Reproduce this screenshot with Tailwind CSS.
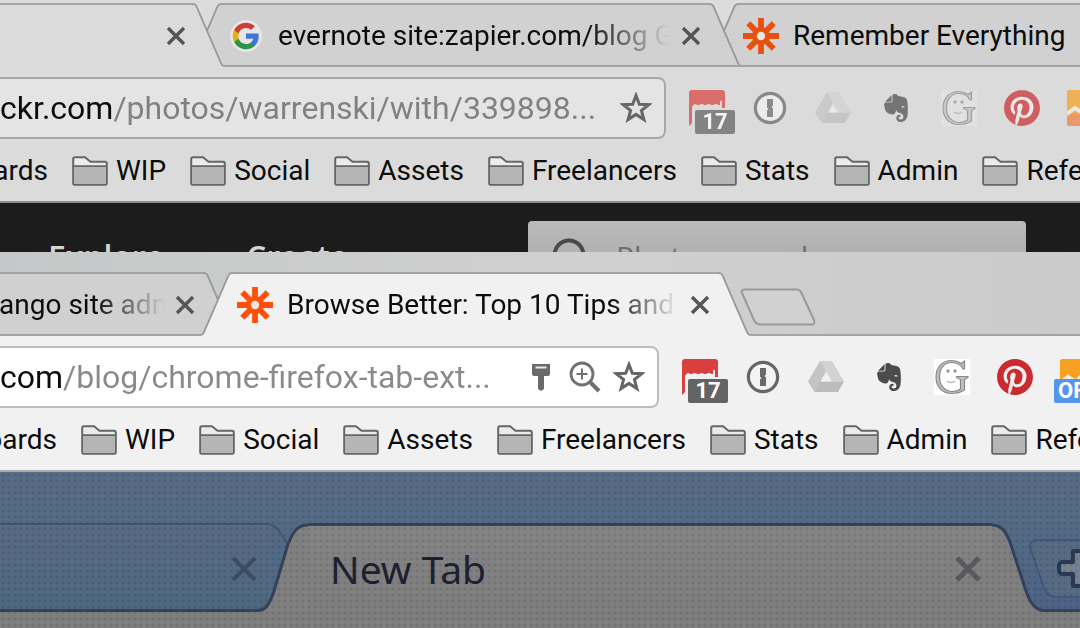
<!DOCTYPE html>
<html lang="en">
<head>
    <meta charset="UTF-8">
    <meta name="viewport" content="width=device-width, initial-scale=1.0">
    <title>Browser Tabs</title>
    <script src="https://cdn.jsdelivr.net/npm/@tailwindcss/browser@4"></script>
</head>
<body class="min-h-screen flex flex-col overflow-hidden bg-[#7f7f7f] font-['Roboto','Liberation_Sans',sans-serif] text-[#0c0c0c]">

    <!-- Shared icons -->
    <svg class="hidden">
        <symbol id="tab-left" viewBox="0 0 32 64">
            <path d="M32 1C29 1 28.500 1.500 27.500 3.500L3 60Q1.500 63 0 63V64H32Z" fill="currentColor"/>
            <path d="M32 1C29 1 28.500 1.500 27.500 3.500L3 60Q1.500 63 0 63" fill="none" stroke="#999" stroke-width="1.800"/>
        </symbol>
        <symbol id="tab-right" viewBox="0 0 32 64">
            <path d="M0 1C3 1 3.500 1.500 4.500 3.500L29 60Q30.500 63 32 63V64H0Z" fill="currentColor"/>
            <path d="M0 1C3 1 3.500 1.500 4.500 3.500L29 60Q30.500 63 32 63" fill="none" stroke="#999" stroke-width="1.800"/>
        </symbol>
        <!-- Background tabs close off at the bottom too -->
        <symbol id="tab-left-back" viewBox="0 0 32 64">
            <use href="#tab-left"/>
            <path d="M0 63H32" stroke="#a3a3a3" stroke-width="2"/>
        </symbol>
        <symbol id="tab-right-back" viewBox="0 0 32 64">
            <use href="#tab-right"/>
            <path d="M0 63H32" stroke="#a3a3a3" stroke-width="2"/>
        </symbol>
        <symbol id="close" viewBox="0 0 20 20">
            <path d="M2 2L18 18M18 2L2 18" fill="none" stroke="#555" stroke-width="3.400"/>
        </symbol>
        <symbol id="zapier" viewBox="0 0 36 36">
            <path d="M18 0V36M0 18H36M5.300 5.300L30.700 30.700M30.700 5.300L5.300 30.700" fill="none" stroke="currentColor" stroke-width="5.800"/>
            <circle cx="18" cy="18" r="9" fill="currentColor"/>
            <circle cx="18" cy="18" r="4.200" fill="#efe6e2"/>
        </symbol>
        <symbol id="google" viewBox="0 0 36 36">
            <circle cx="20" cy="18" r="16" fill="#e6e6e6"/>
            <g transform="translate(5.600 3.600) scale(1.200)">
                <path fill="#3f74d8" d="M22.560 12.250c0-.78-.07-1.530-.2-2.250H12v4.260h5.920c-.26 1.370-1.040 2.530-2.210 3.310v2.770h3.570c2.080-1.920 3.280-4.740 3.280-8.090z"/>
                <path fill="#2f9349" d="M12 23c2.970 0 5.460-.98 7.280-2.660l-3.570-2.770c-.98.66-2.230 1.060-3.710 1.060-2.860 0-5.290-1.930-6.160-4.530H2.180v2.840C3.990 20.530 7.700 23 12 23z"/>
                <path fill="#e8b108" d="M5.840 14.090c-.22-.66-.35-1.360-.35-2.090s.13-1.430.35-2.090V7.070H2.180C1.430 8.550 1 10.220 1 12s.43 3.450 1.180 4.930l3.660-2.840z"/>
                <path fill="#cf3f33" d="M12 5.380c1.620 0 3.060.56 4.210 1.640l3.150-3.150C17.450 2.090 14.970 1 12 1 7.700 1 3.990 3.470 2.180 7.070l3.660 2.840c.87-2.600 3.300-4.530 6.160-4.530z"/>
            </g>
        </symbol>
        <symbol id="folder" viewBox="0 0 36 30">
            <path d="M1.200 27.500V3Q1.200 1.200 3 1.200H13L18.500 5.800H33Q34.800 5.800 34.800 7.600V27.500Q34.800 28.800 33.500 28.800H2.500Q1.200 28.800 1.200 27.500Z" fill="#ebebeb" stroke="#666" stroke-width="2"/>
            <path d="M2 10.500H34V28H2Z" fill="#b5b5b5"/>
            <path d="M1.200 10.200H34.800" stroke="#666" stroke-width="1.800"/>
        </symbol>
        <symbol id="star" viewBox="0 0 32 32">
            <path d="M16 3.500L19.300 12.200L28.700 12.700L21.400 18.500L23.900 27.600L16 22.400L8.100 27.600L10.600 18.500L3.300 12.700L12.700 12.200Z" fill="none" stroke="#666" stroke-width="3"/>
        </symbol>
        <symbol id="pin" viewBox="0 0 32 32">
            <path d="M7 3H25V12.500Q25 15 22.500 15H19V28L16 30L13 28V15H9.500Q7 15 7 12.500Z" fill="#6a6a6a"/>
            <path d="M10.500 6.500H21.500" stroke="#e8e8e8" stroke-width="2"/>
        </symbol>
        <symbol id="zoom" viewBox="0 0 32 32">
            <circle cx="13" cy="13" r="11" fill="none" stroke="#707070" stroke-width="2.800"/>
            <path d="M21 21L30 30" stroke="#707070" stroke-width="4"/>
            <path d="M13 7.500V18.500M7.500 13H18.500" stroke="#707070" stroke-width="2"/>
        </symbol>
        <symbol id="calendar" viewBox="0 0 36 36">
            <path d="M0 36V3Q0 0 3 0H33Q36 0 36 3V18H33V12Q33 10.500 32 10.500T31 12V15H29Q28.500 13.500 26.500 14T24 15H22Q21 13.500 19.500 14T17 15H15Q14 13.500 12.500 14T10 15H8Q6.500 13.500 5 14.500T3 17V33Z" fill="#d93f3c"/>
        </symbol>
        <symbol id="onepassword" viewBox="0 0 36 36">
            <circle cx="18" cy="18" r="14.600" fill="#f4f4f4" stroke="#666" stroke-width="3.200"/>
            <path d="M15 9H21V15.500L19.500 17L21 18.500V27H15V20.500L16.500 19L15 17.500Z" fill="#6a6a6a"/>
        </symbol>
        <symbol id="drive" viewBox="0 0 36 36">
            <path d="M12 2H24L18 13L12.500 22.500L6.500 33L0 22.500Z" fill="#c4c4c4"/>
            <path d="M12 2H24L36 22.500H24Z" fill="#d2d2d2"/>
            <path d="M12 22.500H36L30 33H6.500Z" fill="#bcbcbc"/>
            <path d="M18 15L22.500 22.500H13.500Z" fill="#efefef"/>
        </symbol>
        <symbol id="evernote" viewBox="0 0 24 24">
            <path fill="#4b4b4b" d="M8.222 5.393c0 .239-.02.637-.256.895-.257.24-.652.259-.888.259H4.552c-.73 0-1.165 0-1.460.04-.159.02-.356.1-.455.14-.04.019-.04 0-.02-.02L8.380.796c.02-.02.04-.02.02.02-.04.099-.118.298-.138.457-.04.298-.04.736-.04 1.472v2.647zm5.348 17.869c-.67-.438-1.026-1.015-1.164-1.373a2.924 2.924 0 01-.217-1.095 3.007 3.007 0 013-3.004c.493 0 .888.398.888.895a.88.88 0 01-.454.776c-.099.06-.237.1-.336.12-.098.02-.473.06-.65.218-.198.16-.356.418-.356.697 0 .298.118.577.316.776.355.358.829.557 1.342.557a2.436 2.436 0 002.427-2.447c0-1.214-.809-2.290-1.875-2.766-.158-.08-.414-.14-.651-.2a8.040 8.040 0 00-.592-.1c-.829-.1-2.901-.755-3.040-2.605 0 0-.611 2.785-1.835 3.540-.118.06-.276.12-.454.16-.177.04-.374.06-.434.06-1.993.12-4.105-.517-5.565-2.030 0 0-.987-.815-1.500-3.103-.118-.558-.355-1.553-.493-2.488-.06-.338-.08-.597-.099-.836 0-.975.592-1.631 1.342-1.730h4.026c.69 0 1.086-.18 1.342-.42.336-.317.415-.775.415-1.312V1.354C9.050.617 9.703 0 10.669 0h.474c.197 0 .434.02.651.04.158.02.296.06.533.12 1.204.298 1.460 1.532 1.460 1.532s2.270.398 3.415.597c1.085.199 3.770.378 4.282 3.104 1.204 6.487.474 12.775.415 12.775-.849 6.129-5.901 5.830-5.901 5.830a4.100 4.100 0 01-2.428-.736zm4.540-13.034c-.652-.06-1.204.2-1.402.697-.04.1-.079.219-.059.278.02.06.06.08.099.1.237.12.631.179 1.204.239.572.06.967.1 1.223.06.04 0 .08-.02.119-.08.04-.06.02-.18.02-.28-.06-.536-.553-.934-1.204-1.014z"/>
        </symbol>
        <symbol id="smiley" viewBox="0 0 36 36">
            <path d="M0 0H36V36H0Z" fill="currentColor"/>
            <path d="M30.500 10V2L27.500 4.500Q23 1.500 17.500 1.500C8 1.500 2 8.500 2 18S8 34.500 18 34.500Q25 34.500 30.500 31V20.500L34 18.500V17.500H22.500V18.500L26.500 20.500V30Q23 32.500 18.500 32.500C11 32.500 5.500 27 5.500 18S10.500 3.500 17.500 3.500Q26 3.500 29 10Z" fill="#c0c0c0" stroke="#888" stroke-width="1.200"/>
            <circle cx="14" cy="12" r="1.700" fill="#999"/>
            <circle cx="21" cy="12" r="1.700" fill="#999"/>
            <path d="M13 22Q17 25 21 22" fill="none" stroke="#b5b5b5" stroke-width="1.500"/>
        </symbol>
        <symbol id="pinterest" viewBox="0 0 24 24">
            <circle cx="12" cy="12" r="11.500" fill="#f6eeee"/>
            <path fill="#cb2a30" d="M12.017 0C5.396 0 .029 5.367.029 11.987c0 5.079 3.158 9.417 7.618 11.162-.105-.949-.199-2.403.041-3.439.219-.937 1.406-5.957 1.406-5.957s-.359-.72-.359-1.781c0-1.663.967-2.911 2.168-2.911 1.024 0 1.518.769 1.518 1.688 0 1.029-.653 2.567-.992 3.992-.285 1.193.6 2.165 1.775 2.165 2.128 0 3.768-2.245 3.768-5.487 0-2.861-2.063-4.869-5.008-4.869-3.410 0-5.409 2.562-5.409 5.199 0 1.033.394 2.143.889 2.741.099.12.112.225.085.345-.09.375-.293 1.199-.334 1.363-.053.225-.172.271-.401.165-1.495-.69-2.433-2.878-2.433-4.646 0-3.776 2.748-7.252 7.920-7.252 4.158 0 7.392 2.967 7.392 6.923 0 4.135-2.607 7.462-6.233 7.462-1.214 0-2.354-.629-2.758-1.379l-.749 2.848c-.269 1.045-1.004 2.352-1.498 3.146 1.123.345 2.306.535 3.550.535 6.607 0 11.985-5.365 11.985-11.987C23.970 5.390 18.592.026 11.985.026z"/>
        </symbol>
        <symbol id="analytics" viewBox="0 0 36 36">
            <path d="M0 2Q0 0 2 0H36V36H2Q0 36 0 34Z" fill="#f8a01f"/>
            <path d="M0 27Q3 23 8 23L18 26H36V36H3Q0 36 0 33Z" fill="#f27c3c"/>
            <path d="M0 24L8 18L16 23L24 14L36 21" fill="none" stroke="#f6ece4" stroke-width="4"/>
        </symbol>
    </svg>

    <!-- Window 1 -->
    <section class="bg-[#dbdbdb]">
        <div class="flex h-[67px] items-end overflow-hidden bg-[#dcdcdc] shadow-[inset_0_-2px_0_#a3a3a3]">
            <div class="relative z-30 flex h-16 w-[224px] shrink-0 text-[#dbdbdb]">
                <div class="flex flex-1 items-center justify-end border-t-2 border-[#a3a3a3] bg-[#dbdbdb] pr-1.5">
                    <button aria-label="Close tab"><svg class="size-5"><use href="#close"/></svg></button>
                </div>
                <svg class="h-16 w-8"><use href="#tab-right"/></svg>
            </div>
            <div class="relative z-20 -ml-[34px] flex h-16 w-[551px] shrink-0 text-[#d1d1d1]">
                <svg class="h-16 w-8"><use href="#tab-left-back"/></svg>
                <div class="flex min-w-0 flex-1 items-center border-y-2 border-[#a3a3a3] bg-[#d1d1d1] pt-0.5 pr-2 pl-1">
                    <svg class="size-9 shrink-0"><use href="#google"/></svg>
                    <span class="ml-4 flex-1 overflow-hidden whitespace-nowrap text-[28px] leading-9 text-[#0c0c0c] [mask-image:linear-gradient(to_right,black_78%,transparent_99%)]">evernote site:zapier.com/blog G</span>
                    <button class="ml-2" aria-label="Close tab"><svg class="size-5"><use href="#close"/></svg></button>
                </div>
                <svg class="h-16 w-8"><use href="#tab-right-back"/></svg>
            </div>
            <div class="relative z-10 -ml-[34px] flex h-16 w-[551px] shrink-0 text-[#d1d1d1]">
                <svg class="h-16 w-8"><use href="#tab-left-back"/></svg>
                <div class="flex min-w-0 flex-1 items-center border-y-2 border-[#a3a3a3] bg-[#d1d1d1] pt-0.5 pr-2 pl-1">
                    <svg class="size-9 shrink-0 text-[#e8500e]"><use href="#zapier"/></svg>
                    <span class="ml-3.5 flex-1 overflow-hidden whitespace-nowrap text-[28px] leading-9 text-[#0c0c0c]">Remember Everything</span>
                </div>
            </div>
        </div>

        <div class="flex pt-2.5">
            <div class="flex h-[62px] min-w-0 flex-1 items-center gap-3 rounded-r-lg border-2 border-l-0 border-[#a9a9a9] bg-[#e4e4e4] pr-3">
                <input type="text" aria-label="Address" value="ckr.com/photos/warrenski/with/339898..." class="min-w-0 flex-1 bg-[linear-gradient(to_right,#0c0c0c_112px,#808080_112px)] bg-clip-text text-[32px] leading-10 text-transparent outline-none">
                <button aria-label="Bookmark this page"><svg class="size-8"><use href="#star"/></svg></button>
            </div>
            <div class="ml-[23px] flex w-[391px] items-center gap-[27px] overflow-hidden opacity-70">
                <button class="relative shrink-0" aria-label="Calendar">
                    <svg class="size-9"><use href="#calendar"/></svg>
                    <span class="absolute top-5 left-1.5 w-10 rounded-xs bg-[#5f5f5f] text-center text-[22px] leading-6 font-bold text-white">17</span>
                </button>
                <button class="shrink-0" aria-label="1Password"><svg class="size-9"><use href="#onepassword"/></svg></button>
                <button class="shrink-0" aria-label="Drive"><svg class="size-9"><use href="#drive"/></svg></button>
                <button class="shrink-0 px-1" aria-label="Evernote"><svg class="h-8 w-7"><use href="#evernote"/></svg></button>
                <button class="shrink-0 text-[#e4e4e4]" aria-label="Comic"><svg class="size-9"><use href="#smiley"/></svg></button>
                <button class="shrink-0" aria-label="Pinterest"><svg class="size-9"><use href="#pinterest"/></svg></button>
                <button class="shrink-0" aria-label="Analytics"><svg class="size-9"><use href="#analytics"/></svg></button>
            </div>
        </div>

        <nav class="flex h-16 items-center gap-6 overflow-hidden border-b-2 border-[#8c8c8c] pt-0.5 text-[28px] leading-9 whitespace-nowrap">
            <a href="#" class="flex w-12 shrink-0 justify-end overflow-hidden">Boards</a>
            <a href="#" class="flex items-center gap-2"><svg class="h-[30px] w-9"><use href="#folder"/></svg>WIP</a>
            <a href="#" class="flex items-center gap-2"><svg class="h-[30px] w-9"><use href="#folder"/></svg>Social</a>
            <a href="#" class="flex items-center gap-2"><svg class="h-[30px] w-9"><use href="#folder"/></svg>Assets</a>
            <a href="#" class="flex items-center gap-2"><svg class="h-[30px] w-9"><use href="#folder"/></svg>Freelancers</a>
            <a href="#" class="flex items-center gap-2"><svg class="h-[30px] w-9"><use href="#folder"/></svg>Stats</a>
            <a href="#" class="flex items-center gap-2"><svg class="h-[30px] w-9"><use href="#folder"/></svg>Admin</a>
            <a href="#" class="flex items-center gap-2"><svg class="h-[30px] w-9"><use href="#folder"/></svg>Reference</a>
        </nav>

        <!-- Page behind, cut off by the next window -->
        <div class="flex h-[49px] items-start overflow-hidden bg-[#1c1c1c] font-['Open_Sans',sans-serif]">
            <a href="#" class="mt-[34px] ml-12 w-[198px] text-[32px] leading-10 font-semibold text-[#d4d4d4]">Explore</a>
            <a href="#" class="mt-[34px] w-[282px] text-[32px] leading-10 font-semibold text-[#d4d4d4]">Create</a>
            <div class="mt-[18px] flex h-[70px] w-[498px] items-start rounded bg-linear-to-b from-[#b9b9b9] to-[#a8a8a8] pl-6">
                <svg class="mt-[17px] size-9 shrink-0" viewBox="0 0 36 36"><circle cx="17" cy="17" r="14.500" fill="none" stroke="#4a4a4a" stroke-width="4"/></svg>
                <input type="text" aria-label="Search" placeholder="Photos, people, or groups" class="mt-4 ml-7 min-w-0 flex-1 text-[30px] leading-10 outline-none placeholder:text-[#6d6d6d]">
            </div>
        </div>
    </section>

    <!-- Window 2 -->
    <section class="bg-[#f1f1f1]">
        <div class="flex h-[84px] items-end overflow-hidden bg-linear-to-r from-[#c6c7c8] via-[#cfd0cf] to-[#cbcbcb] shadow-[inset_0_-2px_0_#a3a3a3]">
            <div class="relative z-10 flex h-16 w-[235px] shrink-0 text-[#d0d0d0]">
                <div class="flex min-w-0 flex-1 items-center border-y-2 border-[#a3a3a3] bg-[#d0d0d0] pt-0.5 pr-2">
                    <span class="-ml-[26px] flex-1 overflow-hidden whitespace-nowrap text-[28px] leading-9 text-[#0c0c0c] [mask-image:linear-gradient(to_right,black_62%,transparent_99%)]">Django site admin</span>
                    <button class="ml-2" aria-label="Close tab"><svg class="size-5"><use href="#close"/></svg></button>
                </div>
                <svg class="h-16 w-8"><use href="#tab-right-back"/></svg>
            </div>
            <div class="relative z-20 -ml-[34px] flex h-16 w-[549px] shrink-0 text-[#f1f1f1]">
                <svg class="h-16 w-8"><use href="#tab-left"/></svg>
                <div class="flex min-w-0 flex-1 items-center border-t-2 border-[#a3a3a3] bg-[#f1f1f1] pr-2 pl-1">
                    <svg class="size-9 shrink-0 text-[#ff4f0a]"><use href="#zapier"/></svg>
                    <span class="ml-3.5 flex-1 overflow-hidden whitespace-nowrap text-[28px] leading-9 text-[#0c0c0c] [mask-image:linear-gradient(to_right,black_82%,transparent_99%)]">Browse Better: Top 10 Tips and Tricks</span>
                    <button class="ml-2" aria-label="Close tab"><svg class="size-5"><use href="#close"/></svg></button>
                </div>
                <svg class="h-16 w-8"><use href="#tab-right"/></svg>
            </div>
            <button class="-ml-2.5 mb-2.5" aria-label="New tab">
                <svg class="h-[38px] w-[76px]" viewBox="0 0 76 38"><path d="M5 1.500H56Q60 1.500 61.500 5L74 32Q75.500 36.500 72 36.500H21Q16 36.500 14 32L2 5Q1 1.500 5 1.500Z" fill="#d0d1d0" stroke="#999" stroke-width="2"/></svg>
            </button>
        </div>

        <div class="flex pt-2.5">
            <div class="flex h-[62px] min-w-0 flex-1 items-center gap-3 rounded-r-lg border-2 border-l-0 border-[#bdbdbd] bg-white pr-3">
                <input type="text" aria-label="Address" value="com/blog/chrome-firefox-tab-ext..." class="min-w-0 flex-1 bg-[linear-gradient(to_right,#0c0c0c_62px,#8a8a8a_62px)] bg-clip-text text-[32px] leading-10 text-transparent outline-none">
                <button aria-label="Saved password"><svg class="size-8"><use href="#pin"/></svg></button>
                <button aria-label="Zoom"><svg class="size-8"><use href="#zoom"/></svg></button>
                <button aria-label="Bookmark this page"><svg class="size-8"><use href="#star"/></svg></button>
            </div>
            <div class="ml-[23px] flex w-[398px] items-center gap-[27px] overflow-hidden">
                <button class="relative shrink-0" aria-label="Calendar">
                    <svg class="size-9"><use href="#calendar"/></svg>
                    <span class="absolute top-5 left-1.5 w-10 rounded-xs bg-[#636363] text-center text-[22px] leading-6 font-bold text-white">17</span>
                </button>
                <button class="shrink-0" aria-label="1Password"><svg class="size-9"><use href="#onepassword"/></svg></button>
                <button class="shrink-0" aria-label="Drive"><svg class="size-9"><use href="#drive"/></svg></button>
                <button class="shrink-0 px-1" aria-label="Evernote"><svg class="h-8 w-7"><use href="#evernote"/></svg></button>
                <button class="shrink-0 text-white" aria-label="Comic"><svg class="size-9"><use href="#smiley"/></svg></button>
                <button class="shrink-0" aria-label="Pinterest"><svg class="size-9"><use href="#pinterest"/></svg></button>
                <button class="relative shrink-0" aria-label="Analytics">
                    <svg class="size-9"><use href="#analytics"/></svg>
                    <span class="absolute top-5 -left-1.5 w-12 rounded-xs bg-[#5596ea] pl-1 text-left text-[22px] leading-6 font-bold text-white">OFF</span>
                </button>
            </div>
        </div>

        <nav class="flex h-16 items-center gap-6 overflow-hidden border-b-2 border-[#a9acae] pt-0.5 text-[28px] leading-9 whitespace-nowrap">
            <a href="#" class="flex w-[57px] shrink-0 justify-end overflow-hidden">Boards</a>
            <a href="#" class="flex items-center gap-2"><svg class="h-[30px] w-9"><use href="#folder"/></svg>WIP</a>
            <a href="#" class="flex items-center gap-2"><svg class="h-[30px] w-9"><use href="#folder"/></svg>Social</a>
            <a href="#" class="flex items-center gap-2"><svg class="h-[30px] w-9"><use href="#folder"/></svg>Assets</a>
            <a href="#" class="flex items-center gap-2"><svg class="h-[30px] w-9"><use href="#folder"/></svg>Freelancers</a>
            <a href="#" class="flex items-center gap-2"><svg class="h-[30px] w-9"><use href="#folder"/></svg>Stats</a>
            <a href="#" class="flex items-center gap-2"><svg class="h-[30px] w-9"><use href="#folder"/></svg>Admin</a>
            <a href="#" class="flex items-center gap-2"><svg class="h-[30px] w-9"><use href="#folder"/></svg>Reference</a>
        </nav>
    </section>

    <!-- Window 3, dimmed -->
    <section class="relative flex-1 bg-[#7e7e7e]">
        <div class="flex items-end overflow-hidden bg-linear-to-b from-[#586b84] via-[#526a86] to-[#4c6385] pt-[51px] shadow-[inset_0_-3px_0_#35435a]">
            <div class="flex h-[89px] w-[290px] shrink-0">
                <div class="flex flex-1 items-center justify-end border-t-2 border-b-3 border-t-[#43566f] border-b-[#35435a] bg-linear-to-b from-[#586a86] to-[#4e6880] pt-1 pr-2.5">
                    <button aria-label="Close tab"><svg class="size-7" viewBox="0 0 28 28"><path d="M3 3L25 25M25 3L3 25" stroke="#3f4d64" stroke-width="4"/></svg></button>
                </div>
                <svg class="h-[89px] w-[22px]" viewBox="0 0 22 89"><path d="M0 1C8 2 12 8 20 22V89H0Z" fill="#526a84"/><path d="M0 1C8 2 12 8 20 22" fill="none" stroke="#43566f" stroke-width="2"/></svg>
            </div>
            <div class="relative -ml-8 flex h-[89px] min-w-0 flex-1">
                <svg class="h-[89px] w-[50px] shrink-0" viewBox="0 0 50 89">
                    <path d="M50 2C40 2 36 7 30 21L16 68C12 80 8 87.500 0 87.500V89H50Z" fill="#808080"/>
                    <path d="M50 2C40 2 36 7 30 21L16 68C12 80 8 87.500 0 87.500" fill="none" stroke="#35435a" stroke-width="3"/>
                </svg>
                <div class="flex flex-1 items-center justify-between border-t-3 border-[#35435a] bg-linear-to-b from-[#848484] to-[#7e7e7e] pr-2.5 pl-[22px]">
                    <span class="font-['Noto_Sans',sans-serif] text-[39px] leading-[52px] text-[#1f2030]">New Tab</span>
                    <button aria-label="Close tab"><svg class="size-7" viewBox="0 0 28 28"><path d="M3 3L25 25M25 3L3 25" stroke="#5a5a60" stroke-width="5"/></svg></button>
                </div>
                <svg class="h-[89px] w-[52px] shrink-0" viewBox="0 0 52 89">
                    <path d="M0 2C10 2 15 10 19 22L34 68C38 80 43 87.500 52 87.500V89H0Z" fill="#808080"/>
                    <path d="M0 2C10 2 15 10 19 22L34 68C38 80 43 87.500 52 87.500" fill="none" stroke="#35435a" stroke-width="3"/>
                </svg>
            </div>
            <button class="mb-3 -ml-4 w-[52px] shrink-0 overflow-hidden" aria-label="New tab">
                <svg class="h-[62px] w-[90px]" viewBox="0 0 90 62">
                    <path d="M10 2H90V59H28Q20 59 16 50L3 12Q0 2 10 2Z" fill="#566b82" stroke="#43587a" stroke-width="2"/>
                    <path d="M45 13H57V24H68V36H57V48H45V36H34Q31 36 31 30T34 24H45Z" fill="#75828f" stroke="#2b3a54" stroke-width="4" stroke-linejoin="round"/>
                </svg>
            </button>
        </div>
        <div class="pointer-events-none absolute inset-0 bg-[radial-gradient(circle,#00000018_1px,transparent_2px)] bg-[size:6px_6px]"></div>
    </section>
</body>
</html>
